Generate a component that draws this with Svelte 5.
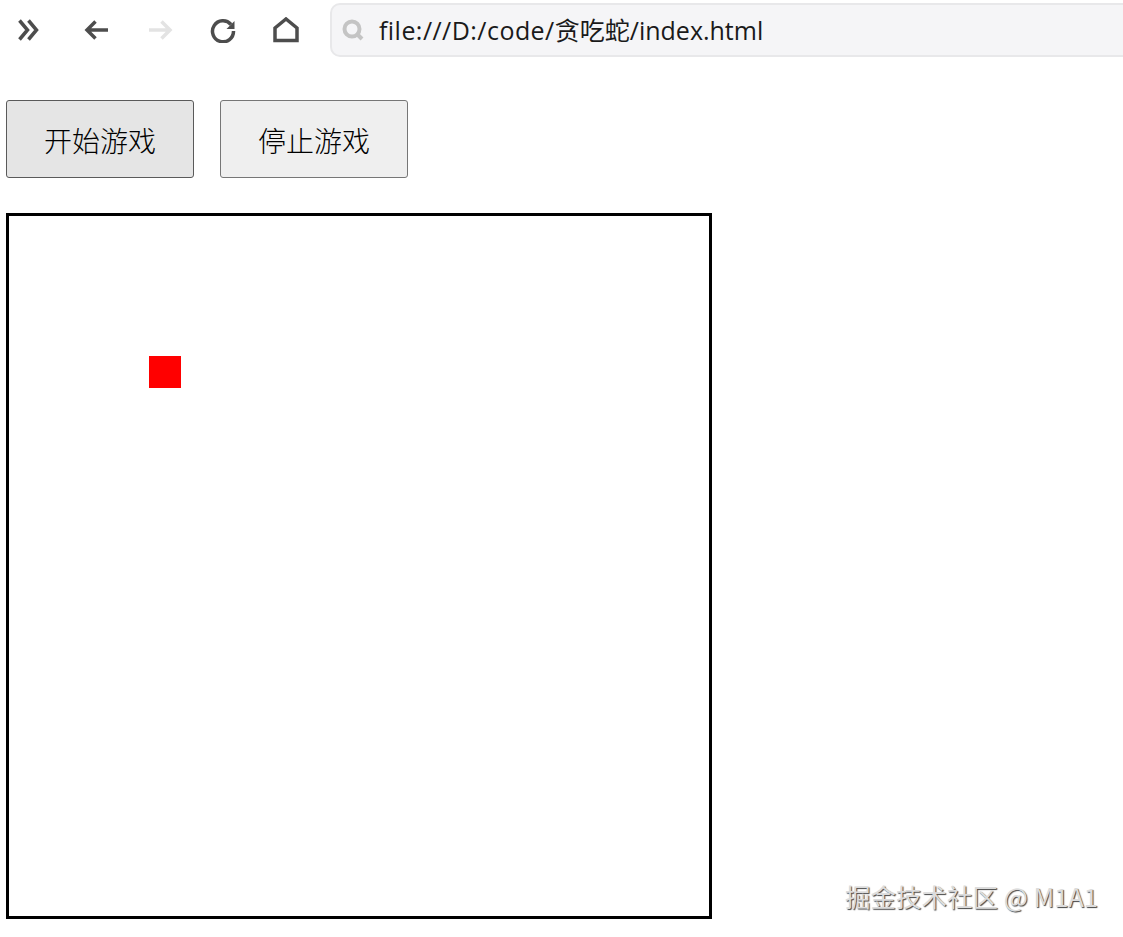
<script>
  const buttons = ['开始游戏', '停止游戏'];
</script>

<div class="page">
  <div class="toolbar">
    <div class="nav">
      <svg class="more" width="24" height="24" viewBox="0 0 24 24"><path d="M2.5 2.5 L10.5 12 L2.5 21.5 M11.5 2.5 L19.5 12 L11.5 21.5" /></svg>
      <svg class="back" width="26" height="24" viewBox="0 0 26 24"><path d="M24 12 H3 M11.5 3.5 L3 12 L11.5 20.5" /></svg>
      <svg class="forward" width="26" height="24" viewBox="0 0 26 24"><path d="M2 12 H23 M14.5 3.5 L23 12 L14.5 20.5" /></svg>
      <svg class="reload" width="26" height="26" viewBox="0 0 26 26"><path d="M21 7.5 A10.5 10.5 0 1 0 23.5 14" /><path class="tip" d="M24.5 4 V12 H16.5 Z" /></svg>
      <svg class="home" width="26" height="26" viewBox="0 0 26 26"><path d="M2 23.5 V11 L13 2 L24 11 V23.5 Z" /></svg>
    </div>
    <div class="address">
      <svg width="24" height="24" viewBox="0 0 24 24"><circle cx="11" cy="11" r="7.5" /><path d="M16.5 16.5 L21 21" /></svg>
      <span class="url"><span class="path">file:///D:/code/</span>贪吃蛇/index.html</span>
    </div>
  </div>

  <main>
    <div class="actions">
      {#each buttons as label, i}
        <button class:active={i === 0}>{label}</button>
      {/each}
    </div>
    <div class="board">
      <div class="food"></div>
    </div>
  </main>

  <div class="watermark">掘金技术社区 @ M1A1</div>
</div>

<style>
  :global(body) { background: #fff; }
  .page { position: relative; width: 1123px; height: 937px; overflow: hidden; font-family: "Noto Sans CJK SC", "Open Sans", sans-serif; }

  .toolbar { display: flex; align-items: center; height: 60px; box-sizing: border-box; }
  .nav { display: flex; align-items: center; width: 330px; flex-shrink: 0; padding-left: 17px; box-sizing: border-box; }
  .nav svg { fill: none; stroke: #4d4d4d; stroke-width: 3.5; flex-shrink: 0; }
  .more { margin-right: 44px; }
  .back { margin-right: 37px; margin-left: -1px; }
  .forward { margin-right: 37px; stroke: #e3e3e3 !important; }
  .reload { margin-right: 37px; }
  .nav .tip { fill: #4d4d4d; stroke: none; }

  .address { flex: 1; display: flex; align-items: center; gap: 14px; height: 54px; margin-right: -12px; padding-left: 9px; background: #f5f5f7; border: 2px solid #e8e8ea; border-radius: 10px; box-sizing: border-box; }
  .address svg { fill: none; stroke: #c4c4c4; stroke-width: 4; width: 24px; height: 24px; flex-shrink: 0; }
  .url { padding-top: 1px; font-family: "Open Sans", "Noto Sans CJK SC", sans-serif; font-size: 25px; color: #1a1a1a; line-height: 1; }
  .path { letter-spacing: 0.45px; }

  main { padding: 40px 0 0 6px; }
  .actions { display: flex; gap: 26px; }
  button { width: 188px; height: 78px; padding: 2px 0 0; font-family: inherit; font-size: 28px; font-weight: 300; color: #000; background: #efefef; border: 1px solid #767676; border-radius: 3px; }
  button.active { background: #e5e5e5; border-color: #5a5a5a; }

  .board { width: 706px; height: 706px; margin-top: 35px; border: 3px solid #000; box-sizing: border-box; padding: 140px 0 0 140px; }
  .food { width: 32px; height: 32px; background: #f00; }

  .watermark { position: absolute; right: 25px; top: 878px; font-size: 25.5px; line-height: 36px; color: #dcdcdc; text-shadow: 1px 1px 1px #444; white-space: nowrap; }
</style>
